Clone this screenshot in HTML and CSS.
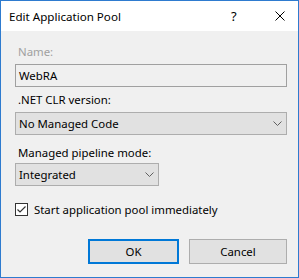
FILE: index.html
```html
<!DOCTYPE html>
<html>
<head>
<meta charset="utf-8">
<link rel="stylesheet" href="styles.css">
</head>
<body>
<div class="window">
  <div class="titlebar">
    <span class="title">Edit Application Pool</span>
    <span class="help">?</span>
    <svg class="close" width="10" height="10" viewBox="0 0 10 10"><path d="M0.5 0.5 L9.5 9.5 M9.5 0.5 L0.5 9.5" stroke="#000" stroke-width="1" fill="none"/></svg>
  </div>
  <div class="content">
    <div class="label disabled">Name:</div>
    <div class="textbox">WebRA</div>
    <div class="label l2">.NET CLR version:</div>
    <div class="combo">
      <span>No Managed Code</span>
      <svg class="chev" width="9" height="5" viewBox="0 0 9 5"><path d="M0.5 0.5 L4.5 4.5 L8.5 0.5" stroke="#606060" stroke-width="1" fill="none"/></svg>
    </div>
    <div class="label l3">Managed pipeline mode:</div>
    <div class="combo small">
      <span>Integrated</span>
      <svg class="chev" width="9" height="5" viewBox="0 0 9 5"><path d="M0.5 0.5 L4.5 4.5 L8.5 0.5" stroke="#606060" stroke-width="1" fill="none"/></svg>
    </div>
    <div class="check-row">
      <span class="checkbox"><svg width="11" height="11" viewBox="0 0 11 11"><path d="M1.5 5.5 L4 8 L9.5 2.5" stroke="#333" stroke-width="1.2" fill="none"/></svg></span>
      <span>Start application pool immediately</span>
    </div>
    <div class="buttons">
      <div class="btn ok">OK</div>
      <div class="btn cancel">Cancel</div>
    </div>
  </div>
</div>
</body>
</html>
```
FILE: styles.css
```css
html, body {
  margin: 0;
  padding: 0;
  background: #f0f0f0;
}
body {
  font-family: "Noto Sans", "Liberation Sans", sans-serif;
  font-size: 11.4px;
  color: #000;
}
.window {
  width: 299px;
  height: 278px;
  box-sizing: border-box;
  border: 1px solid #2e7bcf;
  background: #f0f0f0;
  display: flex;
  flex-direction: column;
}
.titlebar {
  height: 30px;
  background: #fff;
  display: flex;
  align-items: center;
  padding-left: 8px;
  flex-shrink: 0;
}
.title {
  flex: 1;
  font-size: 11.6px;
  line-height: 15px;
  padding-top: 1px;
}
.help {
  width: 10px;
  margin-right: 34px;
  font-size: 13px;
  line-height: 15px;
}
.close {
  margin-right: 13px;
  display: block;
}
.content {
  padding: 13px 11px 0 14px;
  display: flex;
  flex-direction: column;
}
.label {
  line-height: 15px;
  height: 15px;
  padding-left: 3px;
}
.disabled {
  color: #a0a0a0;
}
.textbox {
  margin-top: 5px;
  height: 23px;
  box-sizing: border-box;
  border: 1px solid #a0a0a0;
  padding-left: 3px;
  line-height: 21px;
}
.l2 { margin-top: 5px; }
.l3 { margin-top: 10px; }
.combo {
  margin-top: 5px;
  height: 23px;
  box-sizing: border-box;
  border: 1px solid #adadad;
  background: #e1e1e1;
  padding: 0 4px 0 3px;
  display: flex;
  align-items: center;
  justify-content: space-between;
}
.combo.small {
  width: 144px;
  margin-top: 3px;
}
.chev { display: block; }
.check-row {
  margin-top: 16px;
  height: 15px;
  display: flex;
  align-items: center;
  gap: 6px;
}
.checkbox {
  width: 13px;
  height: 13px;
  box-sizing: border-box;
  border: 1px solid #333;
  background: #fff;
  display: flex;
  align-items: center;
  justify-content: center;
}
.checkbox svg { display: block; }
.buttons {
  margin-top: 22px;
  display: flex;
  justify-content: flex-end;
  gap: 10px;
}
.btn {
  height: 25px;
  box-sizing: border-box;
  background: #e1e1e1;
  display: flex;
  align-items: center;
  justify-content: center;
}
.ok {
  width: 91px;
  border: 2px solid #0078d7;
}
.cancel {
  width: 98px;
  border: 1px solid #adadad;
}
```
